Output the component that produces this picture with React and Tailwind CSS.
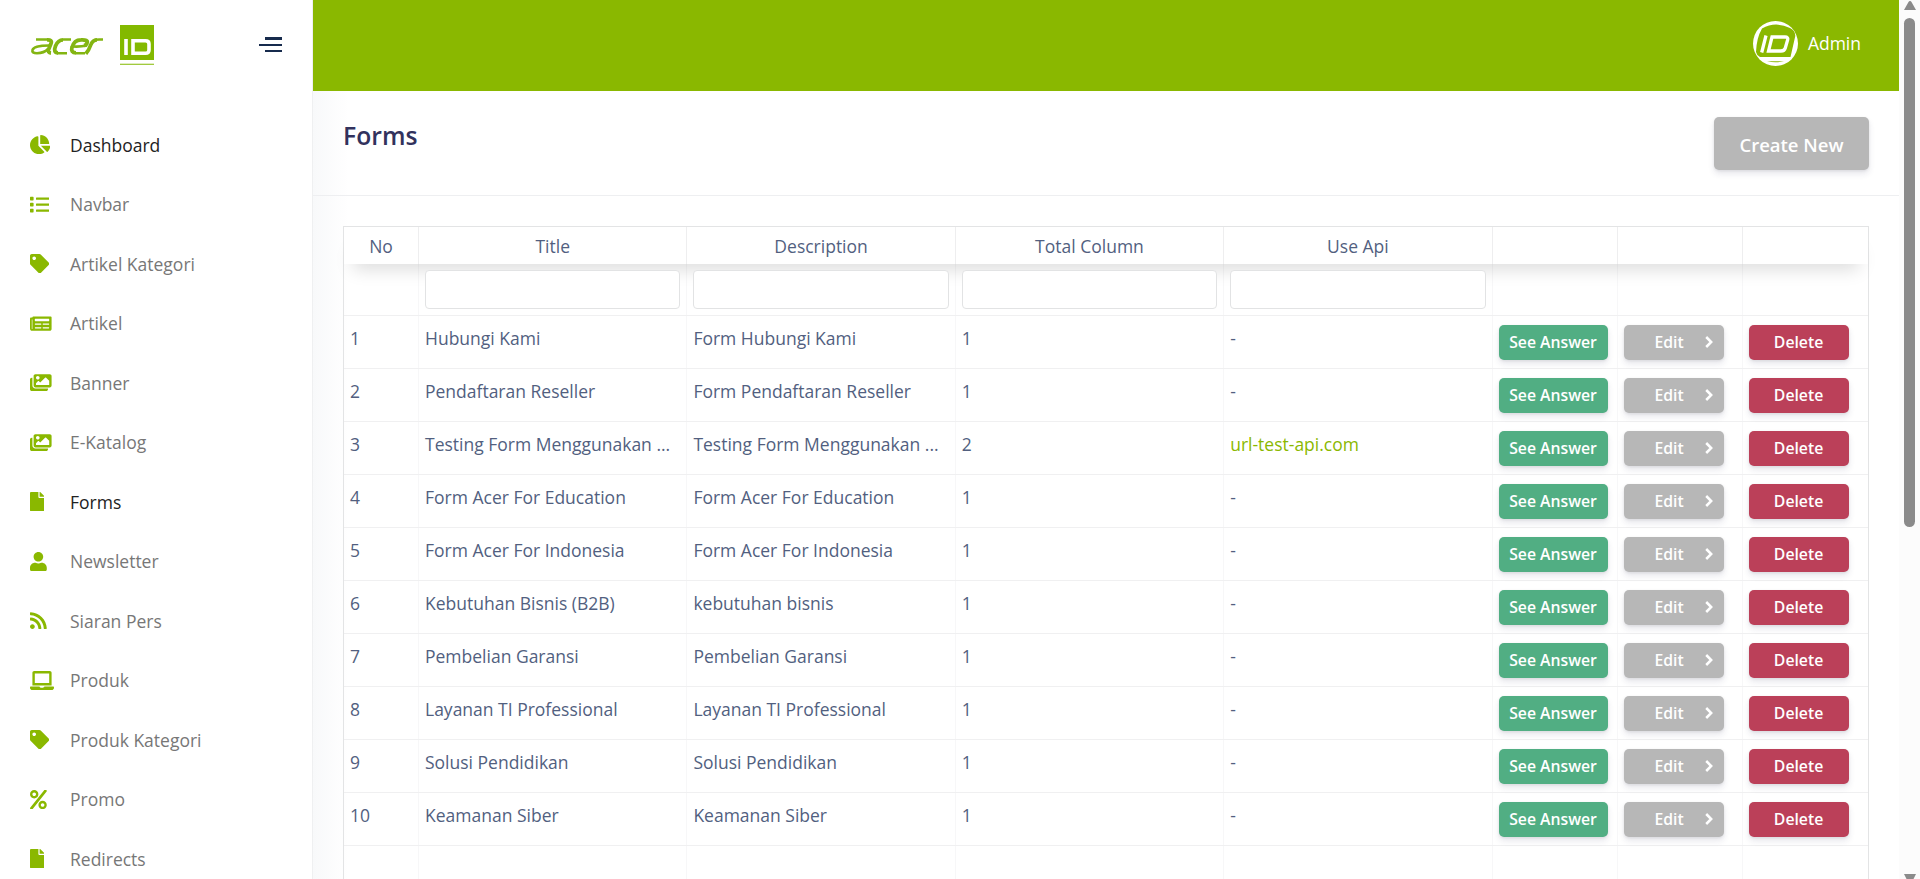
import { FaChartPie, FaList, FaTag, FaNewspaper, FaImages, FaFile, FaUser, FaRss, FaLaptop, FaPercent } from "react-icons/fa";

const nav = [
  ["Dashboard", FaChartPie, "w-[20.4px]", true],
  ["Navbar", FaList, "w-[19.2px]"],
  ["Artikel Kategori", FaTag, "w-[19.2px]"],
  ["Artikel", FaNewspaper, "w-[21.6px]"],
  ["Banner", FaImages, "w-[21.6px]"],
  ["E-Katalog", FaImages, "w-[21.6px]"],
  ["Forms", FaFile, "w-[14.4px]", true],
  ["Newsletter", FaUser, "w-[16.8px]"],
  ["Siaran Pers", FaRss, "w-[16.8px]"],
  ["Produk", FaLaptop, "w-[24px]"],
  ["Produk Kategori", FaTag, "w-[19.2px]"],
  ["Promo", FaPercent, "w-[16.8px]"],
  ["Redirects", FaFile, "w-[14.4px]"],
];

const rows = [
  ["Hubungi Kami", "Form Hubungi Kami", 1],
  ["Pendaftaran Reseller", "Form Pendaftaran Reseller", 1],
  ["Testing Form Menggunakan ...", "Testing Form Menggunakan ...", 2, "url-test-api.com"],
  ["Form Acer For Education", "Form Acer For Education", 1],
  ["Form Acer For Indonesia", "Form Acer For Indonesia", 1],
  ["Kebutuhan Bisnis (B2B)", "kebutuhan bisnis", 1],
  ["Pembelian Garansi", "Pembelian Garansi", 1],
  ["Layanan TI Professional", "Layanan TI Professional", 1],
  ["Solusi Pendidikan", "Solusi Pendidikan", 1],
  ["Keamanan Siber", "Keamanan Siber", 1],
];

const headings = ["No", "Title", "Description", "Total Column", "Use Api", "", "", ""];
const columns = "grid grid-cols-[75px_268.4px_268.4px_268.4px_268.4px_125px_125px_1fr]";
const cell = "border-r border-[#f7f7f8] last:border-r-0 pl-1.5";
const action = "mt-[9px] flex h-[35px] items-center justify-center rounded-[5px] text-[15.75px] font-semibold text-white shadow-[0_4px_6px_rgba(50,50,93,0.11),0_1px_3px_rgba(0,0,0,0.08)]";

function AcerLogo() {
  return (
    <svg className="mt-[12px] h-[19px] w-[74px]" viewBox="0 0 74 19" fill="none" stroke="#83b512">
      <path strokeWidth="2.6" d="M6 2.500H18M19 8.500Q4 8.500 2.500 13Q1.500 16.200 7 16.200Q14 16.200 18 12M41 2.500H33M27 16.200H37M57 8.500Q50 10 43 9.500M46 16.200H55M65 2.700Q67 2.300 73 2.500" />
      <path strokeWidth="3.800" d="M17 2.900Q22.500 2.600 21 6.500L18.600 12.500Q17.600 15.700 21 16M33 2.900Q28 3 25.500 9Q23 15.600 28 15.800M42 10Q40.500 15.800 46 15.800M42 10.500Q44 3 51 2.900Q58.500 2.500 57 6Q56.500 8 54 8.500M55.800 16.800Q59 13 60.700 8Q62.500 3 67 2.900" />
    </svg>
  );
}

function IdLogo() {
  return (
    <svg className="h-10 w-[34px]" viewBox="0 0 34 40">
      <path fill="#83b900" d="M0 0H34V35H0ZM0 38.800H34V39.800H0Z" />
      <path fill="none" stroke="#fff" strokeWidth="3.600" d="M6 14V30M13 15.700H25.500Q29 15.700 29 19V25Q29 28.300 25.500 28.300H13Z" />
    </svg>
  );
}

function Avatar() {
  return (
    <svg className="size-[45px]" viewBox="0 0 45 45">
      <circle cx="22.500" cy="22.500" r="22.500" fill="#fff" />
      <path fill="#8ab800" d="M9 7.500Q22.500 0 37 7Q42.500 10 42.300 15L37.500 36H7Q3.500 34 3 31Q3.500 17 9 7.500ZM14 40.300H31Q22.500 42.300 14 40.300Z" />
      <path fill="none" stroke="#fff" strokeWidth="3.300" d="M13 14.500L8.700 31.500M19 16H32Q35.500 16 34.600 19L32.300 27Q31.500 30 28 30H15.500Z" />
    </svg>
  );
}

export default function App() {
  return (
    <div className="flex h-[879px] w-full overflow-hidden bg-white font-['Open_Sans','Noto_Sans',sans-serif] text-[17.5px]">
      <aside className="flex w-[313px] shrink-0 flex-col border-r border-[#eff0f1] bg-white">
        <div className="flex h-[91px] shrink-0 items-start pt-[25px] pl-[30px]">
          <AcerLogo />
          <span className="ml-4"><IdLogo /></span>
          <button className="mt-3 ml-[105px] flex w-[23px] flex-col items-end gap-[4px]" aria-label="Toggle menu">
            <span className="h-[3px] w-[17px] bg-[#172b4d]" />
            <span className="h-[2px] w-[23px] bg-[#172b4d]" />
            <span className="h-[2px] w-[17px] bg-[#172b4d]" />
          </button>
        </div>
        <nav className="flex flex-col pt-[24px]">
          {nav.map(([label, Icon, width, strong]) => (
            <a key={label} className="flex h-[59.5px] shrink-0 items-center pl-[30px]">
              <span className="flex w-10 shrink-0"><Icon className={`h-[19.2px] shrink-0 text-[#8ab800] ${width}`} /></span>
              <span className={strong ? "text-[#222222]" : "text-[#777777]"}>{label}</span>
            </a>
          ))}
        </nav>
      </aside>
      <main className="flex min-w-0 flex-1 flex-col">
        <header className="flex h-[91px] shrink-0 items-center justify-end bg-[#8ab800] pr-[38px] pb-1 text-white">
          <Avatar />
          <span className="ml-[10px]">Admin</span>
        </header>
        <div className="flex min-h-0 flex-1 flex-col bg-[linear-gradient(to_right,#f8f9fa,#ffffff_36px)]">
          <div className="flex h-[105px] shrink-0 items-start justify-between border-b border-[#eeeff1] pl-[30px] pr-[30px]">
            <h1 className="mt-[27px] text-[24.7px] leading-[36px] font-semibold text-[#32325d]">Forms</h1>
            <button className="mt-[26px] h-[53px] w-[155px] rounded-[5px] bg-[#b7b7b7] pt-[2px] text-[18.5px] font-semibold text-white shadow-[0_4px_6px_rgba(50,50,93,0.11),0_1px_3px_rgba(0,0,0,0.08)]">Create New</button>
          </div>
          <section className="mx-[30px] mt-[30px] flex-1 border border-b-0 border-[#e3e4e5] text-[#525f7f]">
            <div className={`relative h-[37px] bg-white shadow-[0_14px_18px_-9px_rgba(0,0,0,0.15)] ${columns}`}>
              {headings.map((h, i) => (
                <div key={i} className="border-r border-[#eeeeef] pt-[6px] text-center leading-[27px] last:border-r-0">{h}</div>
              ))}
            </div>
            <div className={`h-[52px] border-b border-[#f0f0f1] ${columns}`}>
              {headings.map((h, i) => (
                <div key={i} className={`${cell} pt-1.5 pr-1.5`}>
                  {i > 0 && i < 5 && <input className="relative block h-[39px] w-full rounded-[4px] border border-[#e2e3e4] bg-white" />}
                </div>
              ))}
            </div>
            {rows.map(([title, description, total, api], i) => (
              <div key={title} className={`h-[53px] border-b border-[#f0f0f1] leading-[27px] whitespace-nowrap ${columns}`}>
                <div className={`${cell} pt-[9px]`}>{i + 1}</div>
                <div className={`${cell} pt-[9px]`}>{title}</div>
                <div className={`${cell} pt-[9px]`}>{description}</div>
                <div className={`${cell} pt-[9px]`}>{total}</div>
                <div className={`${cell} pt-[9px]`}>{api ? <a className="text-[#8ab800]">{api}</a> : "-"}</div>
                <div className={cell}><button className={`${action} w-[109px] bg-[#51ae83]`}>See Answer</button></div>
                <div className={cell}>
                  <button className={`${action} relative w-[100px] bg-[#b7b7b7] pr-[9px]`}>
                    Edit
                    <svg className="absolute top-[11px] right-[11px] h-3 w-2" viewBox="0 0 8 12" fill="none" stroke="#fff" strokeWidth="2.500"><path d="M1.200 1L6.200 6L1.200 11" /></svg>
                  </button>
                </div>
                <div className={cell}><button className={`${action} w-[100px] bg-[#bb4059]`}>Delete</button></div>
              </div>
            ))}
            <div className={`h-[53px] ${columns}`}>{headings.map((h, i) => <div key={i} className={cell} />)}</div>
          </section>
        </div>
      </main>
      <div className="flex w-[21px] shrink-0 flex-col items-center justify-between bg-[#fcfcfc]">
        <svg className="mt-[1px] h-[9px] w-3" viewBox="0 0 12 9"><path fill="#8b8b8b" d="M6 0Q7 0 7.500 1L12 9H0L4.500 1Q5 0 6 0Z" /></svg>
        <div className="mt-2 h-[509px] w-[11px] rounded-full bg-[#8b8b8b]" />
        <svg className="mt-auto h-[5px] w-3" viewBox="0 0 12 5"><path fill="#8b8b8b" d="M0 0H12L9.500 5H2.500Z" /></svg>
      </div>
    </div>
  );
}
